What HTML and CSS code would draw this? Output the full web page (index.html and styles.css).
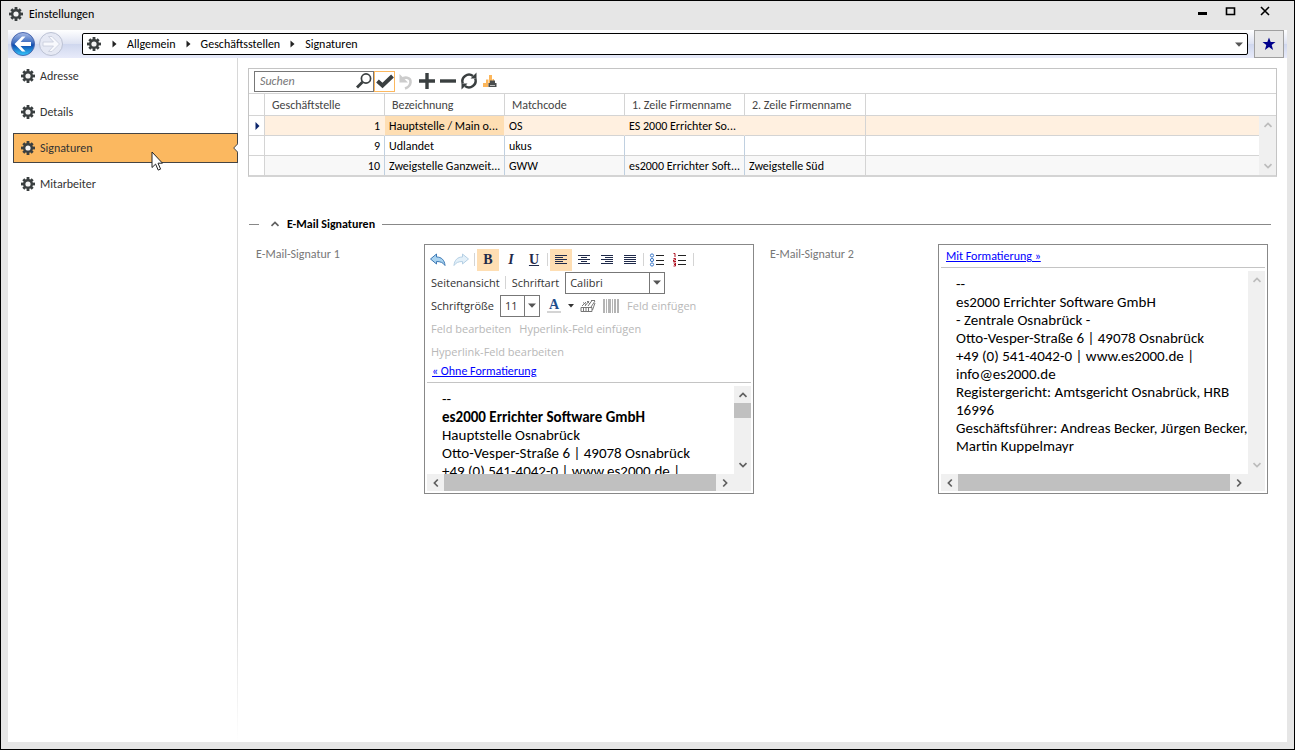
FILE: index.html
```html
<!DOCTYPE html>
<html lang="de">
<head>
    <meta charset="UTF-8">
    <meta name="viewport" content="width=device-width, initial-scale=1.0">
    <title>Einstellungen</title>
    <link rel="stylesheet" href="styles.css">
</head>
<body>
    <!-- Symbole -->
    <svg class="sprite" aria-hidden="true">
        <symbol id="gear" viewBox="0 0 16 16">
            <g fill="#3a3f40">
                <rect x="6.6" y="1" width="2.8" height="14"/>
                <rect x="6.6" y="1.4" width="2.8" height="13.2" transform="rotate(45 8 8)"/>
                <rect x="6.6" y="1" width="2.8" height="14" transform="rotate(90 8 8)"/>
                <rect x="6.6" y="1.4" width="2.8" height="13.2" transform="rotate(135 8 8)"/>
                <circle cx="8" cy="8" r="5"/>
            </g>
            <circle cx="8" cy="8" r="2.6" fill="#f4f4f4"/>
        </symbol>
        <symbol id="crumb" viewBox="0 0 5 8"><path d="M0.5 0.5 4.5 4 0.5 7.5z" fill="#222"/></symbol>
        <symbol id="down" viewBox="0 0 8 5"><path d="M0 0.5h8L4 4.8z" fill="#555"/></symbol>
        <symbol id="chevron" viewBox="0 0 10 8"><path d="M1.5 5.8 5 2.4 8.5 5.800" fill="none" stroke="currentColor" stroke-width="1.7"/></symbol>
    </svg>

    <div class="window">
        <header class="titlebar">
            <svg class="gear"><use href="#gear"/></svg>
            <h1>Einstellungen</h1>
            <div class="window-buttons">
                <button aria-label="Minimieren"><svg width="12" height="12"><path d="M1 8.5h9" stroke="#000" stroke-width="3"/></svg></button>
                <button aria-label="Maximieren"><svg width="12" height="12"><path d="M1.500 3h8v6.5h-8z" fill="none" stroke="#000" stroke-width="1.6"/></svg></button>
                <button aria-label="Schließen"><svg width="12" height="12"><path d="M2 2l8 8M10 2l-8 8" stroke="#000" stroke-width="1.6"/></svg></button>
            </div>
        </header>

        <nav class="navbar" aria-label="Navigation">
            <button class="round" aria-label="Zurück">
                <svg width="26" height="26" viewBox="0 0 26 26">
                    <defs>
                        <linearGradient id="blue" x1="0" y1="0" x2="0" y2="1">
                            <stop offset="0" stop-color="#a9bbe6"/>
                            <stop offset="0.45" stop-color="#3c6cc0"/>
                            <stop offset="0.55" stop-color="#0f4cae"/>
                            <stop offset="1" stop-color="#35ccff"/>
                        </linearGradient>
                    </defs>
                    <circle cx="13" cy="13" r="11.5" fill="url(#blue)" stroke="#4a68b0"/>
                    <path d="M4.500 13l7.500-7.500h3.500l-5 5.500H21v4H10.500l5 5.500H12z" fill="#fff"/>
                </svg>
            </button>
            <button class="round" aria-label="Vor" disabled>
                <svg width="26" height="26" viewBox="0 0 26 26">
                    <circle cx="13" cy="13" r="11.5" fill="#e6e9f4" stroke="#bcc2d4"/>
                    <path d="M21.500 13l-7.500-7.500h-3.500l5 5.500H5v4h10.500l-5 5.500H14z" fill="#f8f9fd" stroke="#c6cbda" stroke-width="0.8"/>
                </svg>
            </button>
            <div class="address">
                <svg class="gear"><use href="#gear"/></svg>
                <svg class="crumb"><use href="#crumb"/></svg>
                <a href="#">Allgemein</a>
                <svg class="crumb"><use href="#crumb"/></svg>
                <a href="#">Geschäftsstellen</a>
                <svg class="crumb"><use href="#crumb"/></svg>
                <a href="#">Signaturen</a>
                <button class="address-drop" aria-label="Verlauf"><svg class="down"><use href="#down"/></svg></button>
            </div>
            <button class="favorite" aria-label="Favorit">
                <svg width="14" height="14" viewBox="0 0 14 14"><path d="M7 0.5l1.700 4.500h4.800L9.700 8l1.400 5L7 10l-4.100 3 1.400-5L0.500 5h4.800z" fill="#00008b"/></svg>
            </button>
        </nav>

        <div class="content">
            <aside class="sidebar">
                <a href="#"><svg class="gear"><use href="#gear"/></svg>Adresse</a>
                <a href="#"><svg class="gear"><use href="#gear"/></svg>Details</a>
                <a href="#" class="active"><svg class="gear"><use href="#gear"/></svg>Signaturen
                    <svg class="notch" viewBox="0 0 5 10"><path d="M5 0.5 0.7 5 5 9.5" fill="#fff" stroke="#444"/></svg>
                    <svg class="cursor" viewBox="0 0 12 20"><path d="M1 1v15.500l3.600-3.400 2.600 6 2.400-1-2.600-5.900h4.500z" fill="#fff" stroke="#222"/></svg>
                </a>
                <a href="#"><svg class="gear"><use href="#gear"/></svg>Mitarbeiter</a>
            </aside>

            <main class="main">
                <section class="grid">
                    <div class="grid-tools">
                        <div class="search">
                            <input type="text" placeholder="Suchen" aria-label="Suchen">
                            <svg width="18" height="18" viewBox="0 0 18 18"><circle cx="11" cy="6.500" r="4.600" fill="none" stroke="#3a3f40" stroke-width="1.7"/><path d="M7.500 10 2 15.500" stroke="#3a3f40" stroke-width="2.8"/></svg>
                        </div>
                        <button class="checked" aria-label="Übernehmen"><svg width="18" height="18" viewBox="0 0 18 18"><path d="M1.500 9l5 4.500L16.500 4" fill="none" stroke="#3a3f40" stroke-width="4"/></svg></button>
                        <button aria-label="Rückgängig" disabled><svg width="18" height="18" viewBox="0 0 18 18"><path d="M4 8.500C7 4 14 5 13.500 10.500 13.200 13.500 11 15.500 8 16.500" fill="none" stroke="#ccc" stroke-width="2.6"/><path d="M2.500 2v8.500H11z" fill="#ccc"/></svg></button>
                        <button aria-label="Neu"><svg width="18" height="18" viewBox="0 0 18 18"><path d="M9 1v16M1 9h16" stroke="#3a3f40" stroke-width="3.4"/></svg></button>
                        <button aria-label="Löschen"><svg width="18" height="18" viewBox="0 0 18 18"><path d="M1 9h16" stroke="#3a3f40" stroke-width="3.400"/></svg></button>
                        <button aria-label="Aktualisieren"><svg width="18" height="18" viewBox="0 0 18 18"><path d="M2.800 11.500A6.600 6.600 0 0 1 13 4M15.200 6.500A6.600 6.600 0 0 1 5 14" fill="none" stroke="#3a3f40" stroke-width="2.4"/><path d="M10.500 6.500h6V0.500zM7.500 11.500h-6v6z" fill="#3a3f40"/></svg></button>
                        <button aria-label="Bericht drucken"><svg width="18" height="18" viewBox="0 0 18 18"><path d="M2 11h3v4H2zM5 7.500h2.500V15H5zM8 3h3v10H8zM11.500 7H13v3h-1.500z" fill="#fcb65b"/><path d="M9 8.500h5V11h1.500v4H7.500v-4H9z" fill="#4a4d4e"/><path d="M9 13.500h5" stroke="#bbb"/></svg></button>
                    </div>
                    <div class="grid-body">
                        <table>
                            <colgroup>
                                <col class="col-mark"><col class="col"><col class="col"><col class="col"><col class="col"><col class="col-wide"><col>
                            </colgroup>
                            <thead>
                                <tr>
                                    <th></th>
                                    <th scope="col">Geschäftstelle</th>
                                    <th scope="col">Bezeichnung</th>
                                    <th scope="col">Matchcode</th>
                                    <th scope="col">1. Zeile Firmenname</th>
                                    <th scope="col">2. Zeile Firmenname</th>
                                    <th></th>
                                </tr>
                            </thead>
                            <tbody>
                                <tr class="selected">
                                    <td class="mark"><svg viewBox="0 0 5 8"><path d="M0.5 0 4.500 4 0.5 8z" fill="#0a246a"/></svg></td>
                                    <td class="number">1</td>
                                    <td class="focus">Hauptstelle / Main o...</td>
                                    <td>OS</td>
                                    <td>ES 2000 Errichter So...</td>
                                    <td class="end"></td>
                                    <td></td>
                                </tr>
                                <tr>
                                    <td class="mark"></td>
                                    <td class="number">9</td>
                                    <td>Udlandet</td>
                                    <td>ukus</td>
                                    <td></td>
                                    <td class="end"></td>
                                    <td></td>
                                </tr>
                                <tr>
                                    <td class="mark"></td>
                                    <td class="number">10</td>
                                    <td>Zweigstelle Ganzweit...</td>
                                    <td>GWW</td>
                                    <td>es2000 Errichter Soft...</td>
                                    <td class="end">Zweigstelle Süd</td>
                                    <td></td>
                                </tr>
                            </tbody>
                        </table>
                        <div class="grid-scroll scroll-y off">
                            <svg class="chev"><use href="#chevron"/></svg>
                            <svg class="chev flip"><use href="#chevron"/></svg>
                        </div>
                    </div>
                </section>

                <section class="signatures">
                    <h2><svg class="chev"><use href="#chevron"/></svg>E-Mail Signaturen</h2>
                    <div class="fields">
                        <label id="label1">E-Mail-Signatur 1</label>
                        <div class="editor">
                            <div class="tools">
                                <div class="tool-row">
                                    <button aria-label="Rückgängig"><svg width="18" height="16" viewBox="0 0 18 16"><path d="M1.500 7 7.500 2v3c5 0 8 3 8.500 8.500C14 10.500 11.500 9.500 7.500 9.500V12z" fill="#a9d3f0" stroke="#3c78b4"/></svg></button>
                                    <button aria-label="Wiederholen" disabled><svg width="18" height="16" viewBox="0 0 18 16"><path d="M16.500 7l-6-5v3c-5 0-8 3-8.500 8.500C4 10.500 6.500 9.500 10.500 9.500V12z" fill="#e3f0f9" stroke="#b4cfe4"/></svg></button>
                                    <i class="sep"></i>
                                    <button class="on letter"><b>B</b></button>
                                    <button class="letter"><em>I</em></button>
                                    <button class="letter"><u>U</u></button>
                                    <i class="sep"></i>
                                    <button class="on" aria-label="Linksbündig"><svg width="12" height="12"><path d="M0 1.500h12M0 3.500h8M0 5.500h12M0 7.500h8M0 9.500h12" stroke="#1f2a4a"/></svg></button>
                                    <button aria-label="Zentriert"><svg width="12" height="12"><path d="M0 1.500h12M3 3.500h6M0 5.500h12M3 7.500h6M0 9.500h12" stroke="#1f2a4a"/></svg></button>
                                    <button aria-label="Rechtsbündig"><svg width="12" height="12"><path d="M0 1.500h12M4 3.500h8M0 5.500h12M4 7.500h8M0 9.500h12" stroke="#1f2a4a"/></svg></button>
                                    <button aria-label="Blocksatz"><svg width="12" height="12"><path d="M0 1.500h12M0 3.500h12M0 5.500h12M0 7.500h12M0 9.500h12" stroke="#1f2a4a"/></svg></button>
                                    <i class="sep"></i>
                                    <button aria-label="Aufzählung"><svg width="16" height="14" viewBox="0 0 16 14"><g fill="#fff" stroke="#3c78c8"><circle cx="3" cy="2.500" r="1.600"/><circle cx="3" cy="7" r="1.600"/><circle cx="3" cy="11.500" r="1.600"/></g><path d="M7 2.500h8M7 7.500h8M7 11.500h8" stroke="#222"/></svg></button>
                                    <button aria-label="Nummerierung"><svg width="16" height="14" viewBox="0 0 16 14"><path d="M1.500 0.500H3v3.500M1.500 5.500h2v1.500h-2v1.500h2.500M1.500 10h2v3h-2M2 11.500h1.500" fill="none" stroke="#b01020"/><path d="M6 2.500h8M6 7.500h8M6 11.500h8" stroke="#222"/></svg></button>
                                    <i class="sep"></i>
                                </div>
                                <div class="tool-row">
                                    <button class="word">Seitenansicht</button>
                                    <i class="sep"></i>
                                    <label class="word" for="font">Schriftart</label>
                                    <span class="combo combo-font"><select id="font"><option>Calibri</option></select><span class="combo-arrow"><svg class="down"><use href="#down"/></svg></span></span>
                                </div>
                                <div class="tool-row">
                                    <label class="word" for="size">Schriftgröße</label>
                                    <span class="combo combo-size"><select id="size"><option>11</option></select><span class="combo-arrow"><svg class="down"><use href="#down"/></svg></span></span>
                                    <button class="letter color"><span>A</span></button>
                                    <button class="tiny" aria-label="Farbe wählen"><svg width="6" height="4"><path d="M0 0h6L3 3.500z" fill="#333"/></svg></button>
                                    <button aria-label="Bild einfügen" disabled><svg width="16" height="14" viewBox="0 0 16 14"><g fill="none" stroke="#777"><path d="M1 8.500h11v4H1zM3.500 8.500v4M6 8.500v4M8.500 8.500v4M2 7l4-4M5 7l4-5M8 7l4-5.500M11 8l4-6M3 3.500l3 2M7 2l3 3M11 1.500h4M12.500 11l2.500-7"/></g></svg></button>
                                    <button aria-label="Barcode einfügen" disabled><svg width="16" height="14"><path d="M0 7h2M3 7h1M5 7h3M9 7h1M11 7h2M14 7h2" stroke="#b4b4b4" stroke-width="14"/></svg></button>
                                    <button class="word" disabled>Feld einfügen</button>
                                </div>
                                <div class="tool-row">
                                    <button class="word" disabled>Feld bearbeiten</button>
                                    <button class="word" disabled>Hyperlink-Feld einfügen</button>
                                </div>
                                <div class="tool-row">
                                    <button class="word" disabled>Hyperlink-Feld bearbeiten</button>
                                </div>
                            </div>
                            <div class="switch"><a href="#">« Ohne Formatierung</a></div>
                            <div class="view">
                                <div class="text" contenteditable="true" role="textbox" aria-multiline="true" aria-labelledby="label1">
                                    <p>--</p>
                                    <p><b>es2000 Errichter Software GmbH</b></p>
                                    <p>Hauptstelle Osnabrück</p>
                                    <p>Otto-Vesper-Straße 6 | 49078 Osnabrück</p>
                                    <p>+49 (0) 541-4042-0 | www.es2000.de |</p>
                                </div>
                                <div class="scroll-y">
                                    <svg class="chev"><use href="#chevron"/></svg>
                                    <span class="thumb"></span>
                                    <svg class="chev flip"><use href="#chevron"/></svg>
                                </div>
                                <div class="scroll-x">
                                    <svg class="chev left"><use href="#chevron"/></svg>
                                    <span class="thumb"></span>
                                    <svg class="chev right"><use href="#chevron"/></svg>
                                </div>
                            </div>
                        </div>

                        <label for="signature2">E-Mail-Signatur 2</label>
                        <div class="editor">
                            <div class="switch"><a href="#">Mit Formatierung »</a></div>
                            <div class="view">
                                <textarea class="text" id="signature2" spellcheck="false">--
es2000 Errichter Software GmbH
- Zentrale Osnabrück -
Otto-Vesper-Straße 6 | 49078 Osnabrück
+49 (0) 541-4042-0 | www.es2000.de | info@es2000.de
Registergericht: Amtsgericht Osnabrück, HRB 16996
Geschäftsführer: Andreas Becker, Jürgen Becker, Martin Kuppelmayr</textarea>
                                <div class="scroll-y off">
                                    <svg class="chev"><use href="#chevron"/></svg>
                                    <svg class="chev flip"><use href="#chevron"/></svg>
                                </div>
                                <div class="scroll-x">
                                    <svg class="chev left"><use href="#chevron"/></svg>
                                    <span class="thumb"></span>
                                    <svg class="chev right"><use href="#chevron"/></svg>
                                </div>
                            </div>
                        </div>
                    </div>
                </section>
            </main>
        </div>
    </div>
</body>
</html>
```
FILE: styles.css
```css
* {
    margin: 0;
    padding: 0;
    box-sizing: border-box;
}

body {
    font-family: Carlito, Lato, sans-serif;
    font-size: 12px;
    line-height: 16px;
    color: #000;
}

button,
input,
select,
textarea {
    font: inherit;
    color: inherit;
    background: none;
    border: none;
    outline: none;
}

a {
    color: inherit;
    text-decoration: none;
}

svg {
    display: block;
    flex: none;
}

.sprite {
    position: absolute;
    width: 0;
    height: 0;
}

.gear {
    width: 16px;
    height: 16px;
}

.crumb {
    width: 5px;
    height: 8px;
}

.down {
    width: 8px;
    height: 5px;
}

.chev {
    width: 10px;
    height: 8px;
    color: #606060;
}

.flip {
    transform: rotate(180deg);
}

.left {
    transform: rotate(-90deg);
}

.right {
    transform: rotate(90deg);
}

/* Fenster */
.window {
    display: flex;
    flex-direction: column;
    min-height: 100vh;
    padding: 0 7px 7px;
    border: 1px solid #000;
    background: #e6e6e6;
}

.titlebar {
    display: flex;
    align-items: center;
    height: 29px;
    padding-bottom: 4px;
}

.titlebar h1 {
    flex: 1;
    margin-left: 5px;
    font-size: 12px;
    font-weight: normal;
}

.window-buttons {
    display: flex;
    gap: 16px;
    padding: 0 16px 5px 0;
}

.window-buttons button:last-child {
    margin-left: 6px;
}

.navbar {
    display: flex;
    align-items: center;
    height: 28px;
    padding: 0 3px 0 2px;
    background: linear-gradient(#fff, #dde2f2 50%, #cfd7ee 50%, #e8ebfa);
}

.round + .round {
    margin-left: 2px;
}

.address {
    display: flex;
    flex: 1;
    align-items: center;
    height: 22px;
    margin: 0 6px 0 18px;
    padding-left: 3px;
    background: #fff;
    border: 1px solid #000;
    border-radius: 2px;
}

.address .crumb {
    margin: 0 10px;
}

.address-drop {
    margin-left: auto;
    padding: 4px;
}

.favorite {
    display: flex;
    align-items: center;
    justify-content: center;
    width: 30px;
    height: 28px;
    background: #e6e6e6;
    border: 1px solid #a0a0a0;
}

.content {
    display: flex;
    flex: 1;
    background: #fff;
}

/* Seitenleiste */
.sidebar {
    display: flex;
    flex-direction: column;
    gap: 6px;
    width: 230px;
    padding: 3px 0 0 5px;
    background: linear-gradient(#d8d8d8 80%, #fff) right / 1px 100% no-repeat;
}

.sidebar a {
    display: flex;
    align-items: center;
    gap: 4px;
    height: 30px;
    padding-left: 6px;
    border: 1px solid transparent;
    color: #333;
}

.sidebar .active {
    position: relative;
    background: #fbb860;
    border-color: #444;
}

.notch {
    position: absolute;
    right: -1px;
    top: 9px;
    width: 5px;
    height: 10px;
}

.cursor {
    position: absolute;
    left: 137px;
    top: 17px;
    width: 12px;
    height: 20px;
}

.main {
    flex: 1;
    min-width: 0;
    padding: 10px;
}

/* Tabelle */
.grid {
    border: 1px solid #c4c4c4;
    border-bottom: 2px solid #d4d4d4;
}

.grid-tools {
    display: flex;
    align-items: center;
    height: 25px;
    padding-left: 5px;
    border-bottom: 1px solid #d4d4d4;
}

.grid-tools button {
    display: flex;
    align-items: center;
    justify-content: center;
    width: 21px;
    height: 21px;
    border: 1px solid transparent;
}

.grid-tools .checked {
    border-color: #fbb860;
}

.search {
    display: flex;
    align-items: center;
    width: 120px;
    height: 21px;
    border: 1px solid #777;
}

.search input {
    flex: 1;
    min-width: 0;
    padding-left: 5px;
}

.search input::placeholder {
    color: #777;
    font-style: italic;
}

.grid-body {
    position: relative;
}

table {
    width: 100%;
    table-layout: fixed;
    border-collapse: separate;
    border-spacing: 0;
}

.col-mark {
    width: 16px;
}

.col {
    width: 120px;
}

.col-wide {
    width: 121px;
}

th,
td {
    height: 20px;
    padding: 0 4px;
    text-align: left;
    white-space: nowrap;
    border-right: 1px solid #d4d4d4;
    border-bottom: 1px solid #d4d4d4;
}

td {
    border-right-color: #c0d0e0;
}

th {
    height: 22px;
    padding: 0 7px;
    font-weight: normal;
    color: #444;
}

th:last-child,
td:last-child {
    border-right: none;
}

tbody tr:last-child td {
    height: 19px;
    border-bottom: none;
}

tbody tr:nth-child(3) td {
    background: #f8f8f8;
}

tbody .selected td {
    background: #fff0e0;
    border-right-color: #fff0e0;
}

tbody .selected .focus {
    background: #fedeb3;
}

tbody tr .end,
tbody .selected .end {
    border-right-color: #d4d4d4;
}

tbody tr .mark,
tbody .selected .mark,
tbody tr:nth-child(3) .mark {
    background: #fff;
    border-right-color: #d4d4d4;
}

.mark svg {
    width: 5px;
    height: 8px;
    margin-left: 2px;
}

.number {
    text-align: right;
}

.grid-scroll {
    position: absolute;
    top: 22px;
    right: 0;
    bottom: 0;
}

/* Bildlaufleisten */
.scroll-y {
    display: flex;
    flex-direction: column;
    align-items: center;
    justify-content: space-between;
    width: 17px;
    padding: 5px 0;
    background: #f0f0f0;
}

.scroll-y .thumb {
    width: 17px;
    height: 15px;
    margin: 4px 0 auto;
    background: #c0c0c0;
}

.scroll-x {
    display: flex;
    align-items: center;
    grid-column: 1 / -1;
    height: 17px;
    padding: 0 21px 0 4px;
    background: #f0f0f0;
}

.scroll-x .thumb {
    flex: 1;
    align-self: stretch;
    margin: 0 4px 0 3px;
    background: #c0c0c0;
}

.off .chev {
    color: #bcbcbc;
}

/* Signaturen */
.signatures {
    margin-top: 39px;
    padding: 0 6px 0 1px;
}

h2 {
    display: flex;
    align-items: center;
    gap: 7px;
    font-size: 12px;
}

h2::before,
h2::after {
    content: "";
    width: 10px;
    height: 1px;
    background: #888;
}

h2::before {
    margin-right: 4px;
}

h2::after {
    flex: 1;
}

.fields {
    display: grid;
    grid-template-columns: 168px minmax(0, 1fr) 184px minmax(0, 1fr);
    margin: 12px 3px 0 7px;
}

.fields > label {
    padding-top: 2px;
    color: #777;
}

.fields > label:nth-of-type(2) {
    padding-left: 16px;
}

.editor {
    display: flex;
    flex-direction: column;
    height: 250px;
    padding: 3px 2px 2px;
    border: 1px solid #888;
}

.tools {
    font-family: "Open Sans", sans-serif;
    font-size: 11px;
    color: #333;
}

.tool-row {
    display: flex;
    align-items: center;
    gap: 1px;
    height: 23px;
    white-space: nowrap;
}

.tool-row button:not(.word) {
    display: flex;
    align-items: center;
    justify-content: center;
    width: 22px;
    height: 22px;
}

.tool-row .word {
    padding: 0 3px 0 4px;
}

.tool-row button:disabled {
    color: #b8b8b8;
}

.tool-row .on {
    background: #fedeb3;
}

.tool-row .letter {
    font-family: "Liberation Serif", serif;
    font-size: 14px;
    font-weight: bold;
    color: #1f2a4a;
}

.tool-row .color {
    line-height: 13px;
    color: #1f4e8c;
}

.color span {
    padding: 0 2px;
    border-bottom: 2px solid #d4d4d4;
}

.tool-row button.tiny:not(.word) {
    width: 10px;
}

.sep {
    width: 1px;
    height: 13px;
    margin: 0 1px;
    background: #d4d4d4;
}

.combo {
    display: flex;
    height: 22px;
    margin: 0 2px;
    border: 1px solid #777;
}

.combo-font {
    width: 100px;
}

.combo-size {
    width: 40px;
}

.combo select {
    flex: 1;
    min-width: 0;
    padding-left: 4px;
    appearance: none;
}

.combo-arrow {
    display: flex;
    align-items: center;
    justify-content: center;
    width: 15px;
    border-left: 1px solid #777;
}

.switch {
    padding: 0 5px 3px;
    border-bottom: 1px solid #c4c4c4;
}

.switch a {
    color: #00f;
    text-decoration: underline;
}

.view {
    display: grid;
    flex: 1;
    grid-template-columns: minmax(0, 1fr) 17px;
    grid-template-rows: minmax(0, 1fr) 17px;
    min-height: 0;
    margin-top: 3px;
}

.text {
    padding: 4px 0 0 15px;
    overflow: hidden;
    font-size: 15px;
    line-height: 18px;
    resize: none;
}
```
